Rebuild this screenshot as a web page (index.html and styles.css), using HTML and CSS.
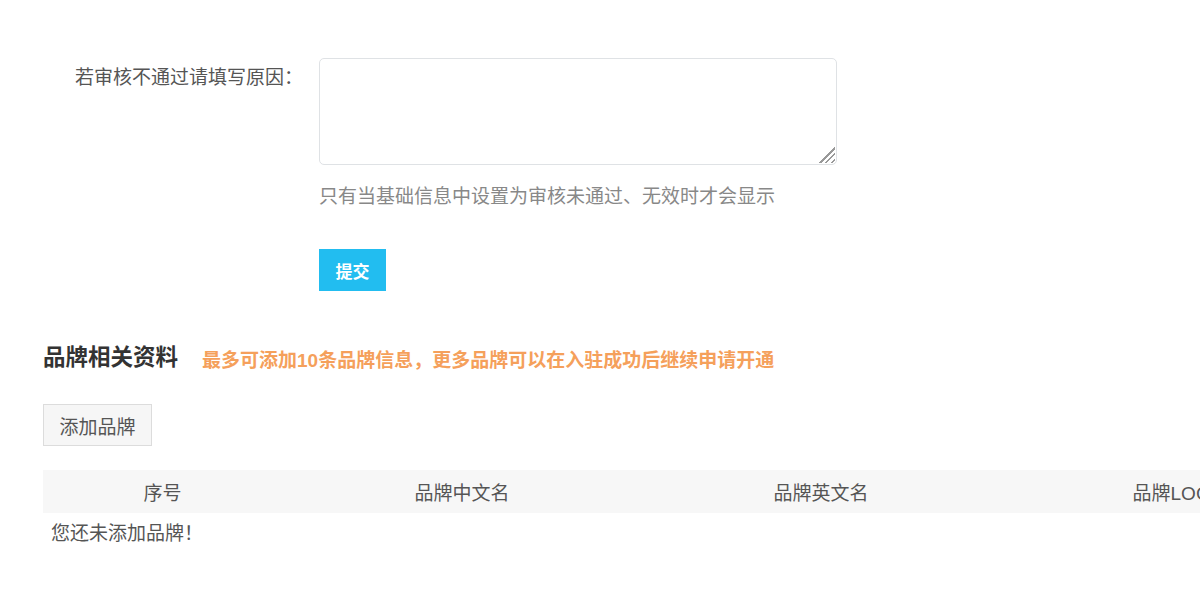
FILE: index.html
```html
<!DOCTYPE html>
<html lang="zh-CN">
<head>
    <meta charset="UTF-8">
    <meta name="viewport" content="width=device-width, initial-scale=1.0">
    <title>品牌相关资料</title>
    <link rel="stylesheet" href="styles.css">
</head>
<body>
    <div class="page">
        <div class="form-row">
            <label class="form-label" for="reason">若审核不通过请填写原因：</label>
            <div class="form-field">
                <textarea id="reason" class="reason-input"></textarea>
                <p class="hint">只有当基础信息中设置为审核未通过、无效时才会显示</p>
            </div>
        </div>

        <div class="form-row submit-row">
            <div class="form-label"></div>
            <div class="form-field">
                <button class="btn-submit">提交</button>
            </div>
        </div>

        <div class="brand-section">
            <div class="section-title">
                <h2>品牌相关资料</h2>
                <span class="tip">最多可添加10条品牌信息，更多品牌可以在入驻成功后继续申请开通</span>
            </div>

            <button class="btn-add">添加品牌</button>

            <table class="brand-table">
                <thead>
                    <tr>
                        <th class="col-no">序号</th>
                        <th class="col-cn">品牌中文名</th>
                        <th class="col-en">品牌英文名</th>
                        <th class="col-logo">品牌LOGO</th>
                        <th class="col-op">操作</th>
                    </tr>
                </thead>
                <tbody>
                    <tr>
                        <!-- no brands yet -->
                        <td class="empty" colspan="5">您还未添加品牌！</td>
                    </tr>
                </tbody>
            </table>
        </div>
    </div>
</body>
</html>
```

FILE: styles.css
```css
html, body {
    margin: 0;
    overflow: hidden;
}
body {
    font-family: "Liberation Sans", "Noto Sans CJK SC", sans-serif;
    color: #555;
    background: #fff;
}
.page {
    padding-top: 58px;
    width: 1600px;
}
.form-row {
    display: flex;
}
.form-label {
    width: 303px;
    flex-shrink: 0;
    text-align: right;
    font-size: 19px;
    line-height: 24px;
    padding-top: 8px;
    color: #555;
}
.form-field {
    margin-left: 16px;
}
.reason-input {
    display: block;
    width: 518px;
    height: 107px;
    box-sizing: border-box;
    border: 1px solid #dfe2e5;
    border-radius: 5px;
    margin: 0;
    padding: 6px 10px;
    font-family: inherit;
    resize: none;
    /* striped resize grip in the corner */
    background: #fff linear-gradient(135deg,
        transparent 50%, #999 50%, #999 57%,
        transparent 57%, transparent 68%, #999 68%, #999 75%,
        transparent 75%, transparent 86%, #999 86%, #999 93%,
        transparent 93%) no-repeat right 1px bottom 1px / 16px 16px;
}
.hint {
    margin: 20px 0 0;
    font-size: 19px;
    line-height: 24px;
    color: #888;
}
.submit-row {
    margin-top: 40px;
}
.submit-row .form-label {
    padding-top: 0;
}
.btn-submit {
    width: 67px;
    height: 42px;
    border: none;
    background-color: #22bdf0;
    color: #fff;
    font-family: inherit;
    font-size: 17px;
    font-weight: bold;
    cursor: pointer;
}
.brand-section {
    margin-left: 43px;
    margin-top: 52px;
}
.section-title {
    display: flex;
    align-items: center;
    height: 30px;
}
.section-title h2 {
    margin: 0;
    font-size: 22.5px;
    line-height: 30px;
    color: #333;
}
.tip {
    margin-left: 24px;
    font-size: 19px;
    font-weight: bold;
    color: #f5a05b;
}
.btn-add {
    display: block;
    margin-top: 31px;
    width: 109px;
    height: 42px;
    background: #f6f6f6;
    border: 1px solid #dcdcdc;
    color: #555;
    font-family: inherit;
    font-size: 19px;
    cursor: pointer;
}
.brand-table {
    margin-top: 24px;
    border-collapse: collapse;
    table-layout: fixed;
    font-size: 19px;
}
.brand-table th {
    height: 43px;
    padding: 0;
    background: #f7f7f7;
    font-weight: normal;
    color: #555;
    text-align: center;
}
.col-no { width: 239px; }
.col-cn { width: 360px; }
.col-en { width: 358px; }
.col-logo { width: 358px; }
.col-op { width: 200px; }
.brand-table td.empty {
    padding: 9px 8px;
    line-height: 24px;
    color: #555;
}
```
